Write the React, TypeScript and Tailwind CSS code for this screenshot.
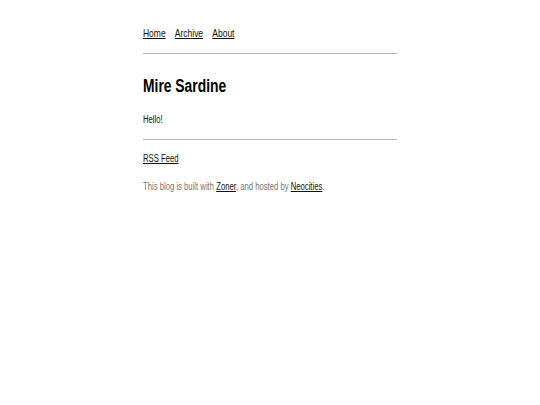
import React from "react";

export default function App() {
  return (
    <div className="min-h-[405px] bg-white" style={{ fontFamily: '"Liberation Sans", Arial, sans-serif' }}>
      <div className="mx-auto w-[254px]">
        <div className="w-[330px] origin-left scale-x-[0.77] pt-[26px] text-[10px] text-[#111]">
          <nav className="flex gap-[12px] text-[11px] leading-[14px]">
            <a href="#" className="underline">Home</a>
            <a href="#" className="underline">Archive</a>
            <a href="#" className="underline">About</a>
          </nav>
          <hr className="mt-[13px] border-0 border-t border-[#bbb]" />
          <h1 className="mt-[21px] text-[18px] font-bold leading-[22px] text-black">Mire Sardine</h1>
          <p className="mt-[16px] leading-[14px]">Hello!</p>
          <hr className="mt-[12px] border-0 border-t border-[#bbb]" />
          <p className="mt-[12px] leading-[14px]"><a href="#" className="underline">RSS Feed</a></p>
          <p className="mt-[14px] leading-[14px] text-[#777]">
            This blog is built with <a href="#" className="underline text-[#111]">Zoner</a>, and hosted by <a href="#" className="underline text-[#111]">Neocities</a>.
          </p>
        </div>
      </div>
    </div>
  );
}
